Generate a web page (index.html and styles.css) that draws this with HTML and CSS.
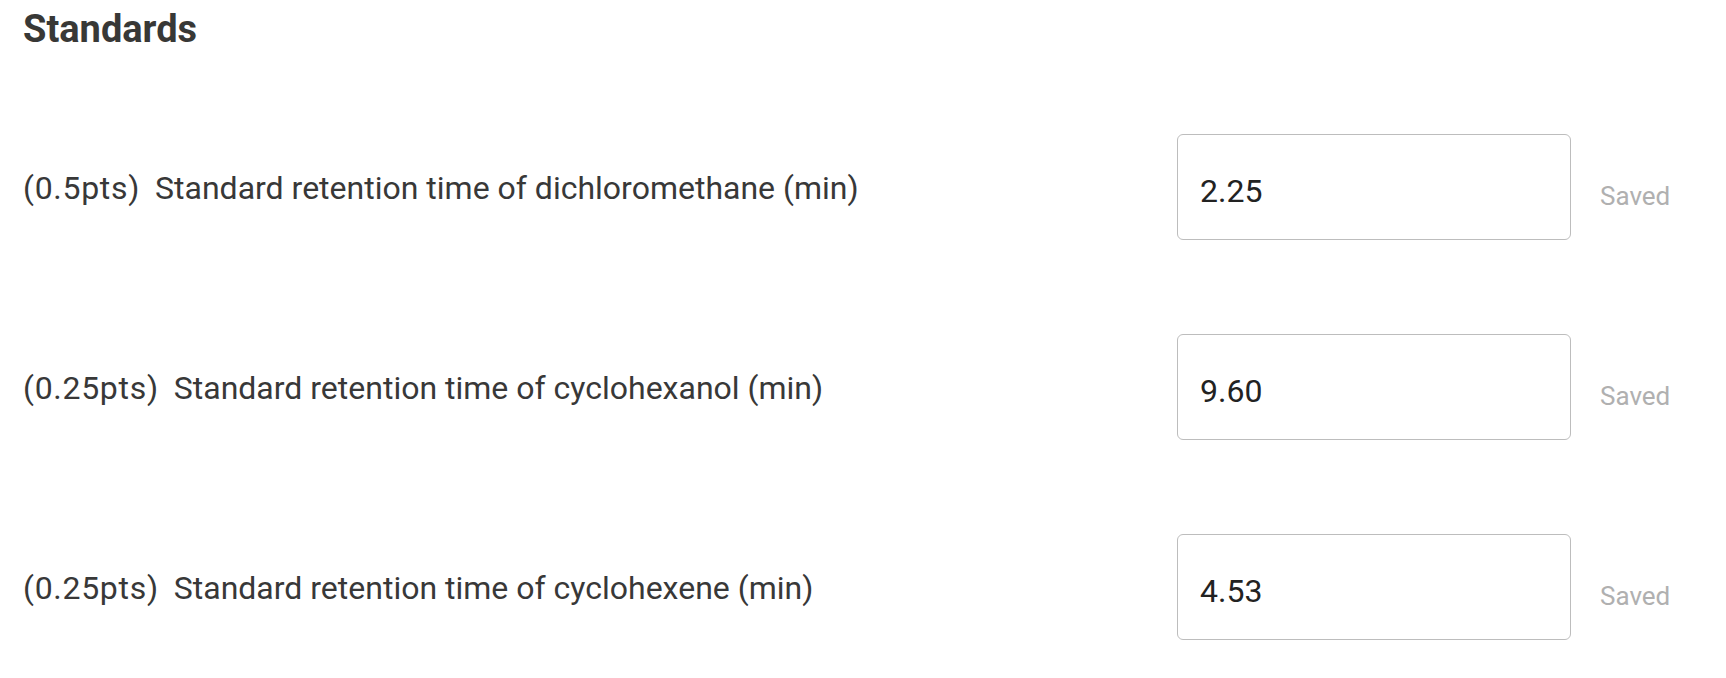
FILE: index.html
```html
<!DOCTYPE html>
<html lang="en">
<head>
<meta charset="utf-8">
<title>Standards</title>
<link rel="stylesheet" href="styles.css">
</head>
<body>
<main class="page">
  <h2 class="title">Standards</h2>
  <div class="rows">
    <div class="row">
      <div class="label"><span class="pts">(0.5pts)</span>Standard retention time of dichloromethane (min)</div>
      <input class="field" type="text" value="2.25">
      <div class="status">Saved</div>
    </div>
    <div class="row">
      <div class="label"><span class="pts">(0.25pts)</span>Standard retention time of cyclohexanol (min)</div>
      <input class="field" type="text" value="9.60">
      <div class="status">Saved</div>
    </div>
    <div class="row">
      <div class="label"><span class="pts">(0.25pts)</span>Standard retention time of cyclohexene (min)</div>
      <input class="field" type="text" value="4.53">
      <div class="status">Saved</div>
    </div>
  </div>
</main>
</body>
</html>
```

FILE: styles.css
```css
html, body {
  margin: 0;
  padding: 0;
  background: #ffffff;
}

.page {
  font-family: Roboto, "Liberation Sans", sans-serif;
  padding: 7px 0 0 23px;
}

.title {
  margin: 0 0 83px 0;
  font-size: 38px;
  line-height: 44px;
  font-weight: 700;
  color: #383836;
}

.rows {
  display: flex;
  flex-direction: column;
  gap: 94px;
}

.row {
  display: grid;
  grid-template-columns: 1fr 394px 126px;
  column-gap: 29px;
  align-items: start;
  height: 106px;
}

.label {
  margin-top: 35px;
  font-size: 32px;
  line-height: 38px;
  color: #383838;
  white-space: nowrap;
}

.pts {
  margin-right: 15px;
  letter-spacing: 0.7px;
}

.field {
  box-sizing: border-box;
  width: 394px;
  height: 106px;
  margin: 0;
  padding: 8px 22px 0 22px;
  border: 1px solid #bdbdbd;
  border-radius: 6px;
  background: #ffffff;
  font-family: Roboto, "Liberation Sans", sans-serif;
  font-size: 32px;
  color: #222222;
  outline: none;
}

.status {
  margin-top: 47px;
  font-size: 26px;
  line-height: 30px;
  color: #b0b0b0;
}
```
